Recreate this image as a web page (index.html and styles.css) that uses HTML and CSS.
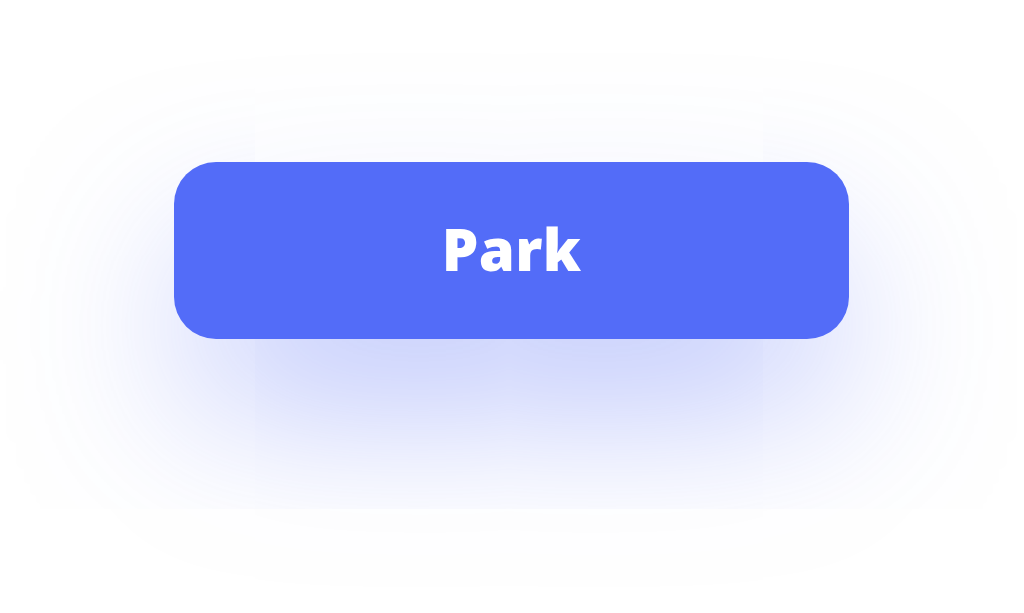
FILE: index.html
```html
<!DOCTYPE html>
<html>
<head>
<meta charset="utf-8">
<link rel="stylesheet" href="styles.css">
</head>
<body>
<main class="stage">
  <button class="park-btn">Park</button>
</main>
</body>
</html>
```
FILE: styles.css
```css
html, body {
  margin: 0;
  padding: 0;
  background: #ffffff;
  overflow: hidden;
}
.stage {
  width: 1024px;
  height: 613px;
  box-sizing: border-box;
  padding: 162px 175px 0 174px;
  display: flex;
  justify-content: center;
  align-items: flex-start;
}
.park-btn {
  width: 675px;
  height: 177px;
  border: none;
  border-radius: 42px;
  background: #536cf8;
  color: #ffffff;
  font-family: "Open Sans", "Noto Sans", sans-serif;
  font-weight: 800;
  font-size: 58px;
  letter-spacing: 0.3px;
  display: flex;
  align-items: center;
  justify-content: center;
  padding: 0 0 4px 0;
  box-shadow: 0 75px 175px -25px rgba(83, 108, 248, 0.5);
  cursor: pointer;
}
```
